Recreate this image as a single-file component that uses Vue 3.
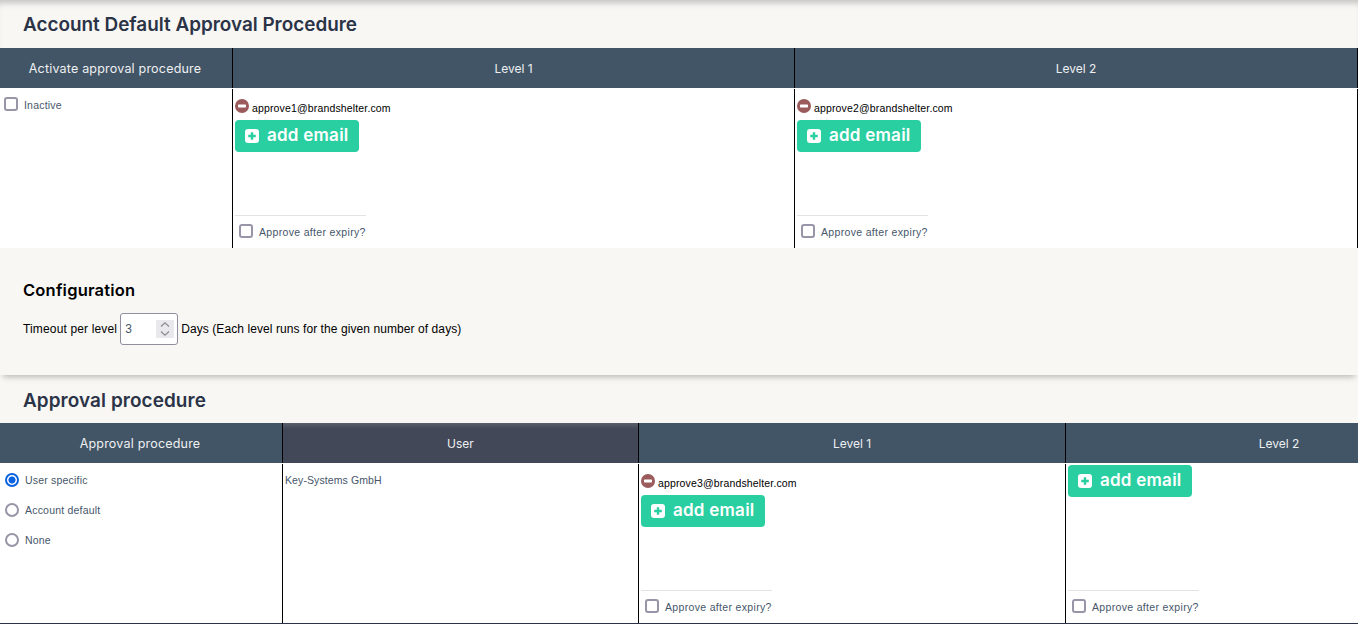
<script setup>
const topLevels = [
  { name: 'Level 1', emails: ['approve1@brandshelter.com'] },
  { name: 'Level 2', emails: ['approve2@brandshelter.com'] }
]
const bottomLevels = [
  { name: 'Level 1', emails: ['approve3@brandshelter.com'] },
  { name: 'Level 2', emails: [] }
]
</script>

<template>
  <div class="page">
    <section class="band first">
      <h2 class="title">Account Default Approval Procedure</h2>
    </section>
    <div class="grid grid-top">
      <div class="head wide">Activate approval procedure</div>
      <div v-for="l in topLevels" :key="l.name" class="head">{{ l.name }}</div>
      <div class="cell">
        <label class="opt check-line"><input type="checkbox" class="box" /><span>Inactive</span></label>
      </div>
      <div v-for="l in topLevels" :key="l.name + 'b'" class="cell level">
        <div class="emails">
          <div v-for="e in l.emails" :key="e" class="email">
            <svg class="minus" viewBox="0 0 14 14" width="14" height="14"><circle cx="7" cy="7" r="7" fill="#9b5a5c"/><rect x="3" y="5.6" width="8" height="2.8" rx="0.6" fill="#fff"/></svg>
            <span>{{ e }}</span>
          </div>
          <button class="add" type="button">
            <svg viewBox="0 0 14 14" width="14" height="14"><rect width="14" height="14" rx="3" fill="#fff"/><path d="M7 3.2v7.6M3.2 7h7.6" stroke="#29cfa1" stroke-width="2.4"/></svg>
            <span class="add-text">add email</span>
          </button>
        </div>
        <div class="expiry"><input type="checkbox" class="box" /><span>Approve after expiry?</span></div>
      </div>
    </div>

    <section class="config">
      <h3 class="config-title">Configuration</h3>
      <div class="timeout">
        <span>Timeout per level</span>
        <span class="num-wrap">
          <input class="num" type="number" value="3" />
          <svg class="spin" viewBox="0 0 18 18" width="18" height="18">
            <rect width="18" height="18" fill="#e9e9ed"/>
            <path d="M5 6.5 9 2.8l4 3.7M5 11.5l4 3.7 4-3.7" fill="none" stroke="#8b8b92" stroke-width="1.2"/>
          </svg>
        </span>
        <span class="days">Days (Each level runs for the given number of days)</span>
      </div>
    </section>

    <section class="band second">
      <h2 class="title">Approval procedure</h2>
    </section>
    <div class="grid grid-bottom">
      <div class="head wide">Approval procedure</div>
      <div class="head user">User</div>
      <div v-for="l in bottomLevels" :key="l.name" class="head">{{ l.name }}</div>
      <div class="cell radios">
        <label class="opt"><input type="radio" name="proc" class="radio" checked /><span>User specific</span></label>
        <label class="opt"><input type="radio" name="proc" class="radio" /><span>Account default</span></label>
        <label class="opt"><input type="radio" name="proc" class="radio" /><span>None</span></label>
      </div>
      <div class="cell user-cell">Key-Systems GmbH</div>
      <div v-for="l in bottomLevels" :key="l.name + 'b'" class="cell level" :class="{ empty: !l.emails.length }">
        <div class="emails">
          <div v-for="e in l.emails" :key="e" class="email">
            <svg class="minus" viewBox="0 0 14 14" width="14" height="14"><circle cx="7" cy="7" r="7" fill="#9b5a5c"/><rect x="3" y="5.6" width="8" height="2.8" rx="0.6" fill="#fff"/></svg>
            <span>{{ e }}</span>
          </div>
          <button class="add" type="button">
            <svg viewBox="0 0 14 14" width="14" height="14"><rect width="14" height="14" rx="3" fill="#fff"/><path d="M7 3.2v7.6M3.2 7h7.6" stroke="#29cfa1" stroke-width="2.4"/></svg>
            <span class="add-text">add email</span>
          </button>
        </div>
        <div class="expiry"><input type="checkbox" class="box" /><span>Approve after expiry?</span></div>
      </div>
    </div>
  </div>
</template>

<style scoped>
.page {
  width: 1358px;
  height: 624px;
  overflow: hidden;
  background: #fff;
  font-family: "Liberation Sans", Arial, sans-serif;
}
.band {
  height: 48px;
  box-sizing: border-box;
  background: #f8f7f4;
  padding: 13px 0 0 23px;
}
.second {
  padding-top: 14px;
}
.second .title {
  letter-spacing: 0.1px;
}
.first {
  box-shadow: inset 0 7px 6px -4px rgba(0, 0, 0, 0.22);
}
.title {
  margin: 0;
  font: 600 18.9px/24px Inter, sans-serif;
  color: #2b3347;
}
.grid {
  display: grid;
  height: 200px;
  grid-template-rows: 40px 160px;
}
.grid-top {
  grid-template-columns: 233px 562px 563px;
}
.grid-bottom {
  grid-template-columns: 283px 356px 427px 427px;
  border-bottom: 1px solid #2b3347;
  height: 201px;
  box-sizing: border-box;
}
.head {
  display: flex;
  align-items: center;
  justify-content: center;
  padding-top: 2px;
  box-sizing: border-box;
  background: #425566;
  color: #eef0f2;
  font: 400 12px/16px Inter, sans-serif;
  border-right: 1px solid #000;
}
.wide {
  padding-right: 2px;
  font-size: 12.5px;
  letter-spacing: 0.2px;
}
.user {
  background: linear-gradient(#5a5f6c 0, #424857 6px, #424857 100%);
}
.cell {
  box-sizing: border-box;
  border-right: 1px solid #000;
  margin-top: 1px;
  font-size: 10.5px;
  color: #46566a;
  min-width: 0;
}
.check-line {
  padding: 8px 0 0 4px;
}
.opt {
  display: flex;
  align-items: flex-start;
  gap: 6px;
  font-size: 10.5px;
  line-height: 14px;
  letter-spacing: 0.2px;
  color: #46566a;
}
.check-line span {
  margin-top: 1px;
}
.box,
.radio {
  appearance: none;
  margin: 0;
  width: 14px;
  height: 14px;
  box-sizing: border-box;
  background: #fff;
  border: 2px solid #9895a8;
  flex: none;
}
.box {
  border-radius: 3px;
}
.radio {
  border-radius: 50%;
}
.radio:checked {
  border-color: #0a63e0;
  background: radial-gradient(circle, #0a63e0 0, #0a63e0 3.2px, #fff 3.9px);
}
.radios {
  display: flex;
  flex-direction: column;
  gap: 16px;
  padding: 9px 0 0 5px;
}
.radios .opt {
  height: 14px;
}
.user-cell {
  padding: 9px 0 0 2px;
  line-height: 14px;
  letter-spacing: 0.1px;
}
.level {
  display: flex;
  flex-direction: column;
  justify-content: space-between;
  padding: 10px 0 0 2px;
}
.empty {
  padding-top: 1px;
}
.emails {
  display: flex;
  flex-direction: column;
  align-items: flex-start;
}
.email {
  display: flex;
  align-items: flex-start;
  gap: 3px;
  height: 21px;
  font-size: 10.5px;
  line-height: 14px;
  letter-spacing: 0.15px;
  color: #000;
}
.email span {
  margin-top: 2px;
}
.add {
  display: flex;
  align-items: center;
  gap: 8px;
  width: 124px;
  height: 32px;
  box-sizing: border-box;
  padding: 0 0 0 10px;
  border: 0;
  border-radius: 4px;
  background: #29cfa1;
  color: #fff;
  font: 600 17px/20px Inter, sans-serif;
  letter-spacing: 0.25px;
}
.add-text {
  margin-top: -2px;
}
.expiry {
  display: flex;
  align-items: center;
  gap: 6px;
  align-self: flex-start;
  height: 33px;
  padding: 0 0 2px 4px;
  box-sizing: border-box;
  border-top: 1px solid #e3e3e3;
  font-size: 10.5px;
  letter-spacing: 0.33px;
  color: #46566a;
}
.expiry span {
  margin-top: 2px;
}
.config {
  position: relative;
  height: 127px;
  box-sizing: border-box;
  background: #f8f7f4;
  padding: 32px 0 0 23px;
  box-shadow: 0 5px 6px -3px rgba(0, 0, 0, 0.25);
}
.config-title {
  margin: 0 0 13px;
  font: 600 16.5px/20px Inter, sans-serif;
  letter-spacing: 0.2px;
  color: #000;
}
.timeout {
  display: flex;
  align-items: center;
  gap: 3px;
  font-size: 12px;
  letter-spacing: 0.15px;
  color: #000;
}
.days {
  letter-spacing: 0.08px;
}
.num-wrap {
  position: relative;
  display: block;
  width: 58px;
  height: 32px;
}
.num {
  display: block;
  width: 58px;
  height: 32px;
  box-sizing: border-box;
  padding: 0 24px 0 4px;
  border: 1px solid #8f8d9e;
  border-radius: 3px;
  background: #fff;
  font: 12px "Liberation Sans", Arial, sans-serif;
  color: #46566a;
  appearance: textfield;
}
.num::-webkit-inner-spin-button {
  appearance: none;
  margin: 0;
}
.spin {
  position: absolute;
  top: 7px;
  right: 4px;
}
</style>
